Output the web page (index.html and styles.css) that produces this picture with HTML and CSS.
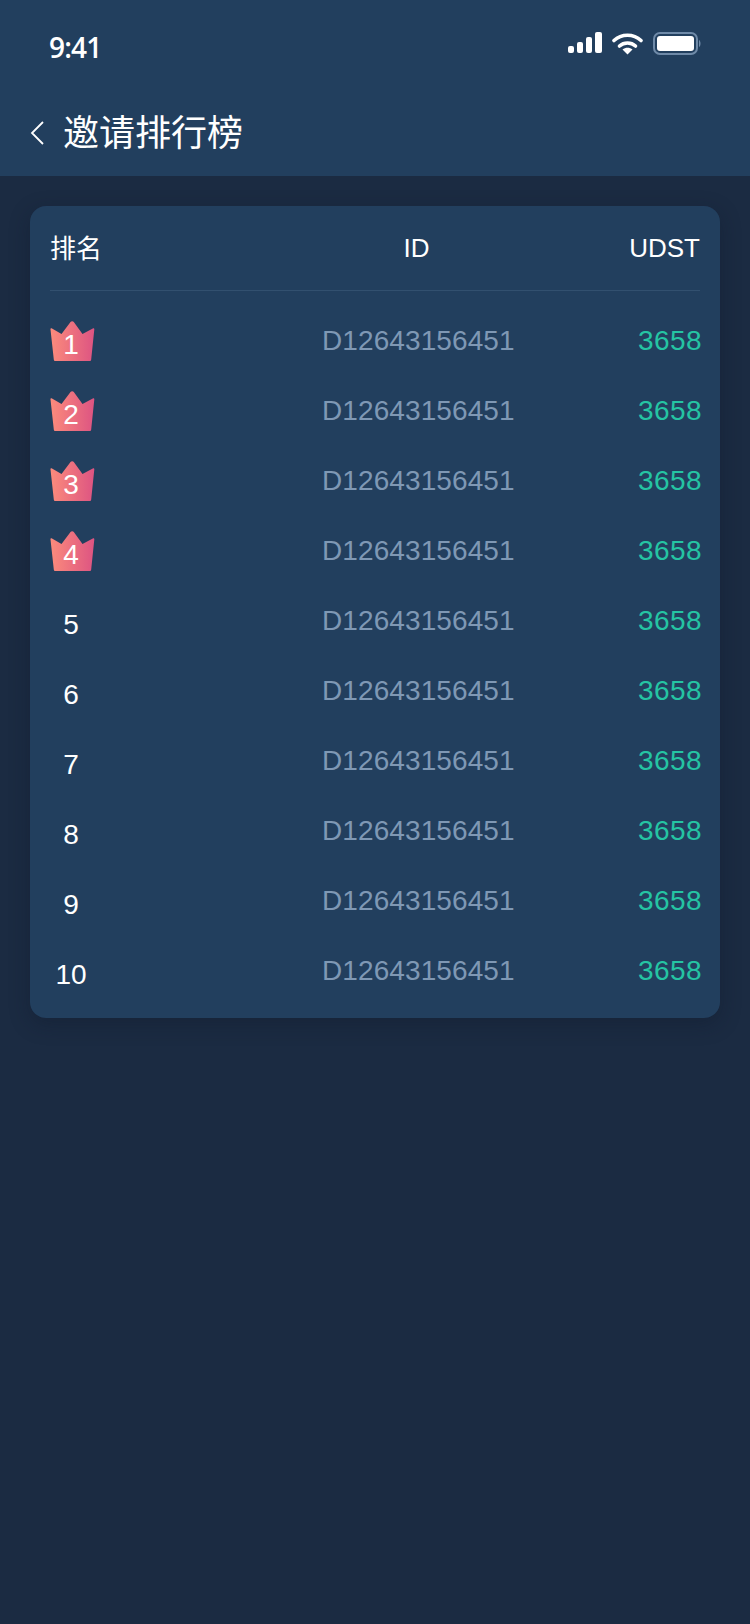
FILE: index.html
```html
<!DOCTYPE html>
<html lang="zh-CN">
<head>
  <meta charset="UTF-8" />
  <title>邀请排行榜</title>
  <link rel="stylesheet" href="styles.css">
</head>
<body>

<header class="top">
  <div class="status">
    <span class="time">9:41</span>
    <div class="status-icons">
      <svg class="signal" width="34" height="22" viewBox="0 0 34 22"><rect x="0" y="14" width="6" height="7" rx="2"/><rect x="9" y="10" width="6" height="11" rx="2"/><rect x="18" y="5" width="6" height="16" rx="2"/><rect x="27" y="0" width="7" height="21" rx="2"/></svg>
      <svg class="wifi" width="31" height="23" viewBox="0 0 31 23"><path d="M2 8.500C9.500 1.500 21.500 1.500 29 8.500" fill="none" stroke="#fff" stroke-width="3.600" stroke-linecap="round"/><path d="M7.500 14C12 10 19 10 23.500 14" fill="none" stroke="#fff" stroke-width="3.600" stroke-linecap="round"/><path d="M15.500 22.500L10.500 17.500C13.500 15.300 17.500 15.300 20.500 17.500Z" fill="#fff"/></svg>
      <svg class="battery" width="49" height="23" viewBox="0 0 49 23"><rect x="1" y="1" width="43" height="21" rx="6" fill="none" stroke="#6f8aa8" stroke-width="2"/><rect x="4" y="4" width="37" height="15" rx="3" fill="#fff"/><path d="M46 8C48 9 48 14 46 15Z" fill="#6f8aa8"/></svg>
    </div>
  </div>
  <div class="nav">
    <svg class="back" width="14" height="24" viewBox="0 0 14 24"><path d="M13 1L2 12L13 23" fill="none" stroke="#fff" stroke-width="1.800"/></svg>
    <h1>邀请排行榜</h1>
  </div>
</header>

<main class="card">
  <div class="row head">
    <span class="name">排名</span>
    <span class="id">ID</span>
    <span class="amount">UDST</span>
  </div>
  <div class="list">
    <div class="row">
      <span class="rank crown">
        <svg width="45" height="40" viewBox="0 0 45 40"><use href="#crown"/></svg>
        <b>1</b>
      </span>
      <span class="id">D12643156451</span>
      <span class="amount">3658</span>
    </div>
    <div class="row">
      <span class="rank crown">
        <svg width="45" height="40" viewBox="0 0 45 40"><use href="#crown"/></svg>
        <b>2</b>
      </span>
      <span class="id">D12643156451</span>
      <span class="amount">3658</span>
    </div>
    <div class="row">
      <span class="rank crown">
        <svg width="45" height="40" viewBox="0 0 45 40"><use href="#crown"/></svg>
        <b>3</b>
      </span>
      <span class="id">D12643156451</span>
      <span class="amount">3658</span>
    </div>
    <div class="row">
      <span class="rank crown">
        <svg width="45" height="40" viewBox="0 0 45 40"><use href="#crown"/></svg>
        <b>4</b>
      </span>
      <span class="id">D12643156451</span>
      <span class="amount">3658</span>
    </div>
    <div class="row"><span class="rank"><b>5</b></span><span class="id">D12643156451</span><span class="amount">3658</span></div>
    <div class="row"><span class="rank"><b>6</b></span><span class="id">D12643156451</span><span class="amount">3658</span></div>
    <div class="row"><span class="rank"><b>7</b></span><span class="id">D12643156451</span><span class="amount">3658</span></div>
    <div class="row"><span class="rank"><b>8</b></span><span class="id">D12643156451</span><span class="amount">3658</span></div>
    <div class="row"><span class="rank"><b>9</b></span><span class="id">D12643156451</span><span class="amount">3658</span></div>
    <div class="row"><span class="rank"><b>10</b></span><span class="id">D12643156451</span><span class="amount">3658</span></div>
  </div>
</main>

<svg class="defs" width="0" height="0">
  <defs>
    <linearGradient id="crownFill" x1="0" y1="0" x2="1" y2="0">
      <stop offset="0" stop-color="#fb8b7c"/>
      <stop offset="1" stop-color="#dd5482"/>
    </linearGradient>
    <path id="crown" fill="url(#crownFill)" d="M0.500 8.500C0.300 7.300 1 7 2 7.500L11.500 13L20.500 1C21.500 -0.100 22.900 -0.100 23.800 1L32.500 13L42.800 7.500C43.800 7 44.400 7.400 44.300 8.500L41.200 38.500C41.100 39.500 40.500 40 39.500 40H5.500C4.500 40 3.900 39.500 3.800 38.500Z"/>
  </defs>
</svg>

</body>
</html>
```

FILE: styles.css
```css
body {
  font-family: "Liberation Sans", "Noto Sans CJK SC", sans-serif;
  background: #1b2b42;
  color: white;
  margin: 0;
  min-height: 1624px;
}

.top {
  background: #223f5e;
  height: 176px;
}

.status {
  height: 88px;
  display: flex;
  justify-content: space-between;
  padding: 0 48px 0 49px;
}

.time {
  font-family: "Open Sans", "Liberation Sans", sans-serif;
  font-size: 28px;
  font-weight: 600;
  letter-spacing: -0.8px;
  line-height: 34px;
  padding-top: 30px;
}

.status-icons {
  display: flex;
  align-items: flex-start;
  gap: 10px;
  padding-top: 32px;
}

.signal {
  fill: white;
}

.nav {
  display: flex;
  align-items: center;
  gap: 19px;
  padding: 4px 0 0 30px;
  height: 84px;
}

.back {
  margin-top: -3px;
}

h1 {
  font-size: 36px;
  font-weight: 400;
  line-height: 44px;
  margin: 0;
}

.card {
  background: #223f5e;
  border-radius: 16px;
  margin: 30px 30px 0;
  padding: 0 20px 12px;
  box-shadow: 0 6px 20px rgba(14, 24, 40, 0.35);
}

.row {
  display: grid;
  grid-template-columns: 272px 192px 1fr;
  align-items: center;
  height: 70px;
  font-size: 28px;
}

.head {
  height: 84px;
  font-size: 26px;
  border-bottom: 1px solid #32506f;
  margin-bottom: 15px;
}

.head .name {
  margin-bottom: 4px;
}

.head .amount {
  color: white;
  margin-right: 0;
  letter-spacing: 0;
}

.id {
  text-align: center;
  color: #7f98b4;
  letter-spacing: 0.1px;
}

.head .id {
  color: white;
  padding-right: 3px;
}

.amount {
  text-align: right;
  color: #25c4a3;
  margin-right: -2px;
  letter-spacing: 0.4px;
}

.rank {
  position: relative;
  width: 42px;
  height: 40px;
  display: flex;
  align-items: center;
  justify-content: center;
  top: 4px;
}

.rank b {
  position: relative;
  font-weight: 400;
  font-size: 28px;
}

.crown {
  top: 0;
}

.crown svg {
  position: absolute;
  left: 0;
  top: 0;
}

.crown b {
  top: 4px;
}

.defs {
  position: absolute;
}
```
